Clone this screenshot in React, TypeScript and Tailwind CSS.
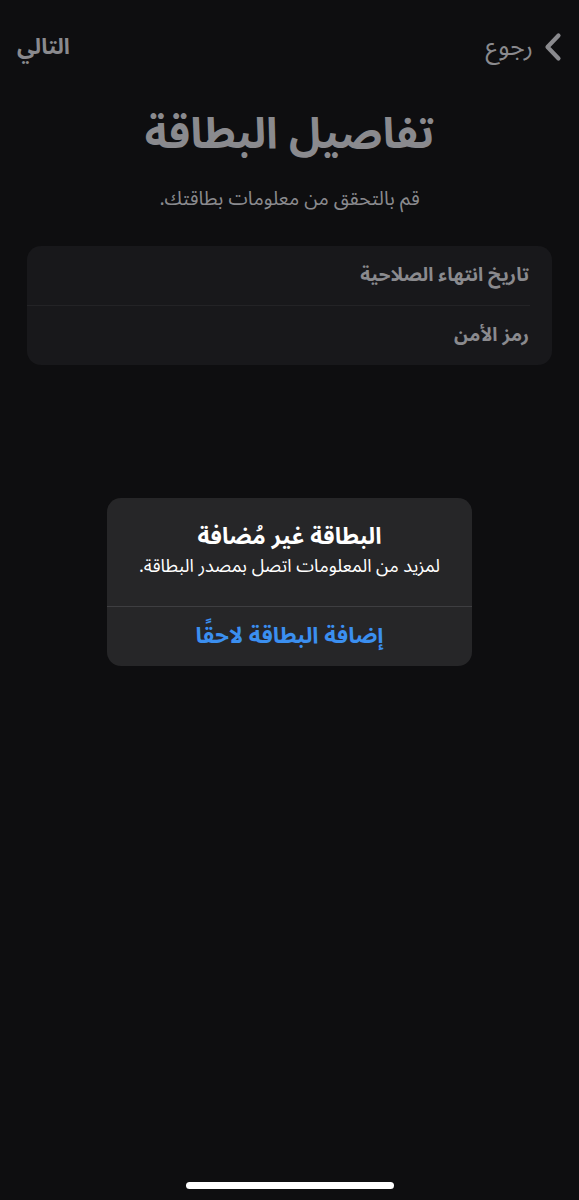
import React from "react";

export default function App() {
  return (
    <div
      dir="rtl"
      className="relative w-[579px] h-[1200px] bg-[#0e0e10] overflow-hidden"
      style={{ fontFamily: '"Noto Sans Arabic", "DejaVu Sans", "Noto Sans", sans-serif' }}
    >
      {/* nav bar */}
      <div className="flex items-center justify-between h-[66px] pt-[28px] pr-[17px] pl-[17px]">
        <div className="flex items-center gap-[11px] text-[#8a8a8e]">
          <svg width="18" height="30" viewBox="0 0 18 30" className="scale-x-[-1]">
            <path d="M3.5 3.5 L14.5 15 L3.5 26.5" fill="none" stroke="#8a8a8e" strokeWidth="4.2" strokeLinecap="round" strokeLinejoin="round" />
          </svg>
          <span className="text-[25px] leading-none">رجوع</span>
        </div>
        <span className="text-[22px] font-bold leading-none text-[#8a8a8e]">التالي</span>
      </div>

      <h1 className="mt-[43px] text-center text-[43px] font-bold leading-[52px] text-[#8a8a8e]">
        تفاصيل البطاقة
      </h1>
      <p className="mt-[25px] text-center text-[19.5px] leading-[26px] text-[#8a8a8e]">
        قم بالتحقق من معلومات بطاقتك.
      </p>

      <div className="mx-[27px] mt-[34px] rounded-[14px] bg-[#18181b]">
        <div className="flex items-center h-[59px] pr-[23px] text-[19px] font-bold text-[#8a8a8e]">
          تاريخ انتهاء الصلاحية
        </div>
        <div className="mr-[22px] h-px bg-[#232326]" />
        <div className="flex items-center h-[59px] pr-[23px] text-[19px] font-bold text-[#8a8a8e]">
          رمز الأمن
        </div>
      </div>

      {/* alert */}
      <div className="absolute left-[107px] top-[498px] w-[365px] rounded-[14px] bg-[#262628] overflow-hidden">
        <div className="flex flex-col items-center justify-center h-[108px] px-4 pb-[4px]">
          <div className="text-[23px] font-bold leading-[28px] text-white">البطاقة غير مُضافة</div>
          <div className="mt-[4px] text-[18px] leading-[22px] text-white">
            لمزيد من المعلومات اتصل بمصدر البطاقة.
          </div>
        </div>
        <div className="h-px bg-[#3e3e41]" />
        <div className="flex items-center justify-center h-[59px] text-[22.5px] font-bold text-[#3b8ff0]">
          إضافة البطاقة لاحقًا
        </div>
      </div>

      {/* home indicator */}
      <div className="absolute left-[186px] top-[1182px] w-[208px] h-[7px] rounded-full bg-white" />
    </div>
  );
}
